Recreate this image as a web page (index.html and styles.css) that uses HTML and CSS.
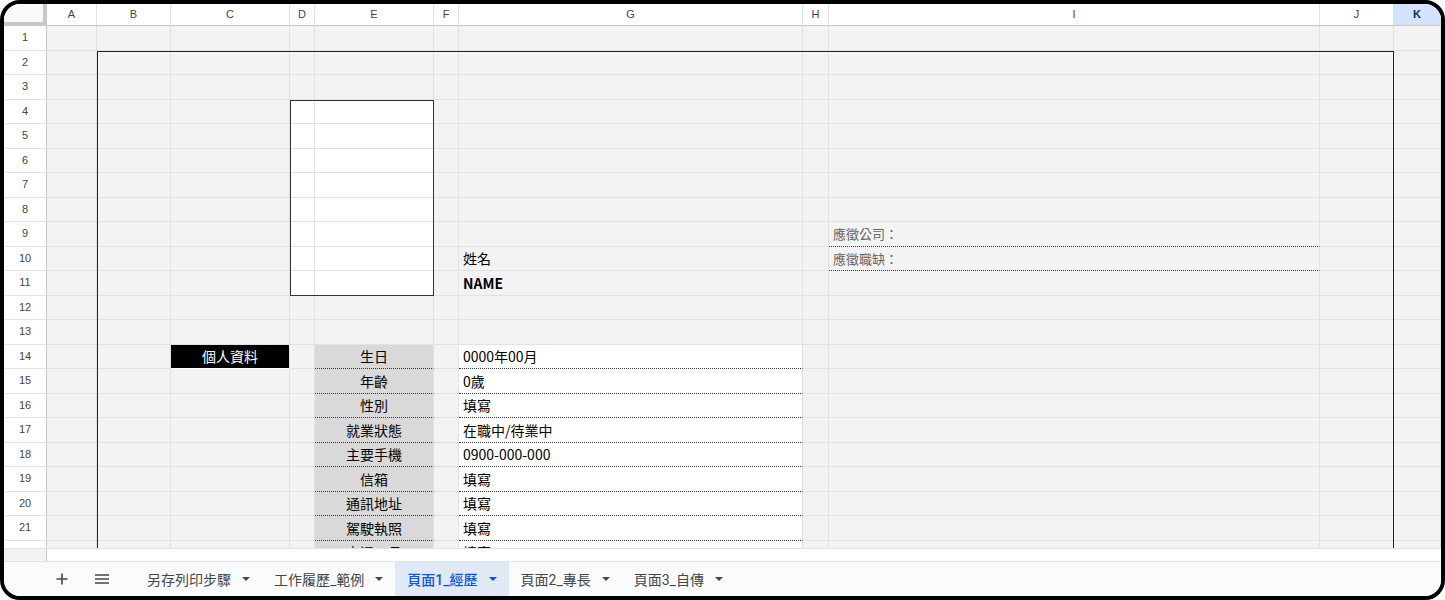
FILE: index.html
```html
<!DOCTYPE html>
<html lang="zh-Hant">
<head>
<meta charset="utf-8">
<title>履歷表 - 頁面1_經歷</title>
<link rel="stylesheet" href="styles.css">
</head>
<body>
<div class="window">
  <div class="viewport">
    <div class="sheet">
      <div class="cells">
        <!-- column headers -->
        <div class="corner"></div>
        <div class="ch">A</div><div class="ch">B</div><div class="ch">C</div><div class="ch">D</div><div class="ch">E</div><div class="ch">F</div><div class="ch">G</div><div class="ch">H</div><div class="ch">I</div><div class="ch">J</div><div class="ch sel">K</div>

        <div class="rh">1</div><div></div><div></div><div></div><div></div><div></div><div></div><div></div><div></div><div></div><div></div><div></div>
        <div class="rh">2</div><div></div><div></div><div></div><div></div><div></div><div></div><div></div><div></div><div></div><div></div><div></div>
        <div class="rh">3</div><div></div><div></div><div></div><div></div><div></div><div></div><div></div><div></div><div></div><div></div><div></div>
        <div class="rh">4</div><div></div><div></div><div></div><div class="w"></div><div class="w"></div><div></div><div></div><div></div><div></div><div></div><div></div>
        <div class="rh">5</div><div></div><div></div><div></div><div class="w"></div><div class="w"></div><div></div><div></div><div></div><div></div><div></div><div></div>
        <div class="rh">6</div><div></div><div></div><div></div><div class="w"></div><div class="w"></div><div></div><div></div><div></div><div></div><div></div><div></div>
        <div class="rh">7</div><div></div><div></div><div></div><div class="w"></div><div class="w"></div><div></div><div></div><div></div><div></div><div></div><div></div>
        <div class="rh">8</div><div></div><div></div><div></div><div class="w"></div><div class="w"></div><div></div><div></div><div></div><div></div><div></div><div></div>
        <div class="rh">9</div><div></div><div></div><div></div><div class="w"></div><div class="w"></div><div></div><div></div><div></div><div class="ask">應徵公司：</div><div></div><div></div>
        <div class="rh">10</div><div></div><div></div><div></div><div class="w"></div><div class="w"></div><div></div><div class="txt">姓名</div><div></div><div class="ask">應徵職缺：</div><div></div><div></div>
        <div class="rh">11</div><div></div><div></div><div></div><div class="w"></div><div class="w"></div><div></div><div class="txt name">NAME</div><div></div><div></div><div></div><div></div>
        <div class="rh">12</div><div></div><div></div><div></div><div></div><div></div><div></div><div></div><div></div><div></div><div></div><div></div>
        <div class="rh">13</div><div></div><div></div><div></div><div></div><div></div><div></div><div></div><div></div><div></div><div></div><div></div>
        <div class="rh">14</div><div></div><div></div><div class="tag">個人資料</div><div></div><div class="lbl">生日</div><div></div><div class="val">0000年00月</div><div></div><div></div><div></div><div></div>
        <div class="rh">15</div><div></div><div></div><div></div><div></div><div class="lbl">年齡</div><div></div><div class="val">0歲</div><div></div><div></div><div></div><div></div>
        <div class="rh">16</div><div></div><div></div><div></div><div></div><div class="lbl">性別</div><div></div><div class="val">填寫</div><div></div><div></div><div></div><div></div>
        <div class="rh">17</div><div></div><div></div><div></div><div></div><div class="lbl">就業狀態</div><div></div><div class="val">在職中/待業中</div><div></div><div></div><div></div><div></div>
        <div class="rh">18</div><div></div><div></div><div></div><div></div><div class="lbl">主要手機</div><div></div><div class="val">0900-000-000</div><div></div><div></div><div></div><div></div>
        <div class="rh">19</div><div></div><div></div><div></div><div></div><div class="lbl">信箱</div><div></div><div class="val">填寫</div><div></div><div></div><div></div><div></div>
        <div class="rh">20</div><div></div><div></div><div></div><div></div><div class="lbl">通訊地址</div><div></div><div class="val">填寫</div><div></div><div></div><div></div><div></div>
        <div class="rh">21</div><div></div><div></div><div></div><div></div><div class="lbl">駕駛執照</div><div></div><div class="val">填寫</div><div></div><div></div><div></div><div></div>
        <div class="rh">22</div><div></div><div></div><div></div><div></div><div class="lbl">交通工具</div><div></div><div class="val">填寫</div><div></div><div></div><div></div><div></div>
      </div>
      <!-- merged-range borders drawn above the cells -->
      <div class="overlay">
        <div class="page-frame"></div>
        <div class="photo-frame"></div>
      </div>
    </div>
  </div>

  <div class="band">
    <div class="band-head"></div>
    <div class="band-rest"></div>
  </div>

  <div class="tabbar">
    <button class="tool" type="button" aria-label="新增工作表">
      <svg width="14" height="14" viewBox="0 0 14 14"><path d="M7 1.5v11M1.5 7h11" stroke="#444746" stroke-width="1.6" fill="none"/></svg>
    </button>
    <button class="tool" type="button" aria-label="所有工作表">
      <svg width="16" height="14" viewBox="0 0 16 14"><path d="M1 3h14M1 7h14M1 11h14" stroke="#444746" stroke-width="1.5" fill="none"/></svg>
    </button>
    <div class="tabs">
      <div class="tab">另存列印步驟<svg class="caret" width="8" height="4" viewBox="0 0 8 4"><path d="M0 0h8L4 4z"/></svg></div>
      <div class="tab">工作履歷_範例<svg class="caret" width="8" height="4" viewBox="0 0 8 4"><path d="M0 0h8L4 4z"/></svg></div>
      <div class="tab active">頁面1_經歷<svg class="caret" width="8" height="4" viewBox="0 0 8 4"><path d="M0 0h8L4 4z"/></svg></div>
      <div class="tab">頁面2_專長<svg class="caret" width="8" height="4" viewBox="0 0 8 4"><path d="M0 0h8L4 4z"/></svg></div>
      <div class="tab">頁面3_自傳<svg class="caret" width="8" height="4" viewBox="0 0 8 4"><path d="M0 0h8L4 4z"/></svg></div>
    </div>
  </div>
</div>
</body>
</html>
```

FILE: styles.css
```css
:root {
  --cols: 43px 50px 74px 119px 25px 119px 25px 344px 26px 491px 74px 47px;
  --rows: 22px repeat(22, 24.5px);
  --grid: #e2e2e2;
  --edge: #c7c7c7;
  --fill: #f3f3f3;
  --cell-font: "Noto Sans CJK TC", "Liberation Sans", sans-serif;
}

* { box-sizing: border-box; }

html, body {
  margin: 0;
  background: #fff;
}

body {
  font-family: "Liberation Sans", Arial, "Noto Sans CJK TC", sans-serif;
  color: #000;
}

.window {
  width: 1445px;
  height: 600px;
  border: 4px solid #000;
  border-radius: 20px;
  overflow: hidden;
  display: flex;
  flex-direction: column;
  background: #fff;
}

/* ---------- grid ---------- */

.viewport {
  flex: none;
  height: 544px;
  overflow: hidden;
}

.sheet {
  display: grid;
}

.cells,
.overlay {
  grid-area: 1 / 1;
  display: grid;
  grid-template-columns: var(--cols);
  grid-template-rows: var(--rows);
}

.cells > div {
  display: flex;
  align-items: center;
  min-width: 0;
  padding: 0 3px;
  overflow: hidden;
  white-space: nowrap;
  background: var(--fill);
  border-right: 1px solid var(--grid);
  border-bottom: 1px solid var(--grid);
  font-family: var(--cell-font);
  font-size: 14px;
  line-height: 1;
}

.cells > .corner {
  background: #f8f9fa;
  border-right: 4px solid var(--edge);
  border-bottom: 4px solid var(--edge);
}

.cells > .ch,
.cells > .rh {
  justify-content: center;
  background: #fff;
  color: #444;
  font-family: "Liberation Sans", Arial, sans-serif;
  font-size: 11px;
}

.cells > .ch {
  border-bottom-color: var(--edge);
}

.cells > .rh {
  border-right-color: var(--edge);
}

.cells > .ch.sel {
  background: #d3e3fd;
  color: #0b2a60;
  font-weight: bold;
}

.cells > .w {
  background: #fff;
}

.cells > .txt {
  padding-left: 4px;
}

.cells > .name {
  font-weight: bold;
}

.cells > .ask {
  padding-left: 4px;
  color: #666;
  font-size: 13px;
  border-bottom: 1px dotted #333;
}

.cells > .tag {
  justify-content: center;
  background: #000;
  color: #fff;
  border-bottom-color: #fff;
}

.cells > .lbl {
  justify-content: center;
  background: #d9d9d9;
  border-bottom: 1px dotted #333;
}

.cells > .val {
  padding-left: 4px;
  background: #fff;
  border-bottom: 1px dotted #333;
}

.overlay {
  pointer-events: none;
}

.page-frame {
  grid-area: 3 / 3 / 24 / 12;
  border: 1px solid #222;
}

.photo-frame {
  grid-area: 5 / 5 / 13 / 7;
  border: 1px solid #333;
}

/* ---------- horizontal scroll strip ---------- */

.band {
  flex: none;
  height: 13px;
  display: flex;
  border-top: 1px solid var(--grid);
}

.band-head {
  width: 43px;
  background: var(--fill);
  border-right: 1px solid var(--edge);
}

.band-rest {
  flex: 1;
  background: #fff;
}

/* ---------- sheet tabs ---------- */

.tabbar {
  flex: 1;
  display: flex;
  align-items: stretch;
  padding-left: 38px;
  background: #f9fbfd;
  border-top: 1px solid #e3e3e3;
  font-family: Roboto, "Noto Sans CJK TC", sans-serif;
  font-size: 14px;
  color: #444746;
}

.tool {
  width: 40px;
  padding: 0;
  border: 0;
  background: transparent;
  display: flex;
  align-items: center;
  justify-content: center;
}

.tabs {
  display: flex;
  margin-left: 13px;
}

.tab {
  display: flex;
  align-items: center;
  gap: 11px;
  padding: 0 12px;
  white-space: nowrap;
}

.tab .caret {
  fill: #444746;
}

.tab.active {
  background: #e1e9f7;
  color: #0b57d0;
  font-weight: 500;
}

.tab.active .caret {
  fill: #0b57d0;
}
```
